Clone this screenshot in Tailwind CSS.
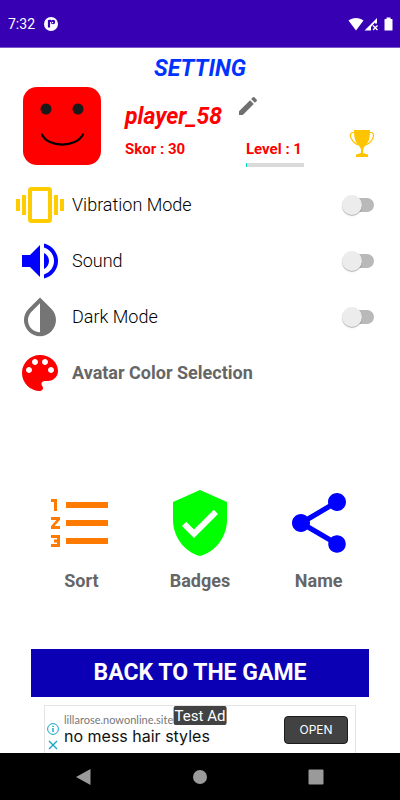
<!DOCTYPE html>
<html lang="en">
<head>
    <meta charset="UTF-8">
    <meta name="viewport" content="width=device-width, initial-scale=1.0">
    <title>Setting</title>
    <script src="https://cdn.jsdelivr.net/npm/@tailwindcss/browser@4"></script>
</head>
<body class="bg-white font-['Roboto',sans-serif] min-h-screen flex flex-col">

    <!-- status bar -->
    <header class="bg-[#3700b3] h-12 pl-2 pr-1 flex items-center text-white border-b border-[#7a58cc]">
        <span class="text-sm">7:32</span>
        <svg class="w-4 h-4 ml-2" viewBox="0 0 16 16">
            <circle cx="8" cy="8" r="7" fill="#fff"/>
            <path d="M6 4v7.500M6 4.800h2" stroke="#3700b3" stroke-width="2.200" fill="none"/>
            <circle cx="10" cy="6" r="2.200" fill="#3700b3"/>
            <circle cx="9.500" cy="6.500" r=".8" fill="#fff"/>
        </svg>
        <svg class="w-4 h-4 ml-auto" viewBox="0 0 16 16" fill="#fff">
            <path d="M8 14.500L.5 4.500C4.500 1 11.500 1 15.500 4.500z"/>
        </svg>
        <svg class="w-4 h-4" viewBox="0 0 16 16" fill="#fff">
            <path d="M.5 14.500L13 2v5.500h-2V6.500L7 11v3.500z"/>
            <path d="M9 9.500l4.500 4.500M13.500 9.500l-4.500 4.500" stroke="#fff" stroke-width="1.400"/>
        </svg>
        <svg class="w-4 h-4" viewBox="0 0 16 16" fill="#fff">
            <path d="M6.500 1.500h4V3h1.500q.5 0 .5.500v10.500q0 .5-.5.500h-7q-.5 0-.5-.5V3.500Q4.500 3 5 3h1.500z"/>
        </svg>
    </header>

    <main class="flex-1 flex flex-col">
        <h1 class="mt-[5px] h-8 leading-8 text-[23px] font-bold italic text-center text-[#0033ff]">SETTING</h1>

        <!-- player -->
        <section class="flex items-start pl-[23px] pr-6 mt-0.5">
            <svg class="w-[78px] h-[78px] shrink-0" viewBox="0 0 78 78">
                <rect width="78" height="78" rx="14" fill="#ff0000"/>
                <circle cx="23" cy="22" r="5.500" fill="#1a1a1a"/>
                <circle cx="55" cy="22" r="5.500" fill="#1a1a1a"/>
                <path d="M19 47.500C25 61 53 61 60 47.500" fill="none" stroke="#000" stroke-width="2.200" stroke-linecap="round"/>
            </svg>
            <div class="ml-6 flex-1 text-[#ff0000]">
                <div class="flex items-start h-11">
                    <h2 class="mt-3.5 leading-8 text-[23px] font-bold italic">player_58</h2>
                    <button class="ml-3.5 mt-[7px]" aria-label="Edit name">
                        <svg class="w-6 h-6" viewBox="0 0 24 24" fill="#707070">
                            <path d="M3 17.250V21h3.750L17.810 9.940l-3.750-3.750L3 17.250zM20.710 7.040a1 1 0 0 0 0-1.410l-2.340-2.340a1 1 0 0 0-1.410 0l-1.830 1.830 3.750 3.750 1.830-1.830z"/>
                        </svg>
                    </button>
                </div>
                <div class="flex items-start pt-2">
                    <p class="w-[121px] text-[15px] leading-5 font-bold">Skor : 30</p>
                    <div>
                        <p class="text-[15px] leading-5 font-bold">Level : 1</p>
                        <div class="mt-1 h-1 w-[58px] bg-[#dadada]" role="progressbar" aria-label="Level" aria-valuenow="2">
                            <div class="h-full bg-[#03dac5]" style="width: 2%"></div>
                        </div>
                    </div>
                    <svg class="ml-auto -mt-3 w-7 h-8" viewBox="0 0 28 32">
                        <path d="M7 5.500H4.500Q2 6 2.500 9.500 4 15 10 18M21 5.500h2.500Q26 6 25.500 9.500 24 15 18 18" fill="none" stroke="#ffc400" stroke-width="1.200"/>
                        <path d="M6 3h16q.5 11-5 16-2 2-2 4v3l5 1.500V30H8v-2.500L13 26v-3q0-2-2-4Q5.500 14 6 3z" fill="#ffc400"/>
                    </svg>
                </div>
            </div>
        </section>

        <!-- options -->
        <section class="mt-2.5 pl-4 pr-[26px] text-lg font-light text-black">
            <label class="flex items-center h-14">
                <svg class="w-12 h-12 mr-2" viewBox="0 0 24 24" fill="#ffcc00">
                    <path d="M0 15h2V9H0v6zm3 2h2V7H3v10zm19-8v6h2V9h-2zm-3 8h2V7h-2v10zM16.500 3h-9C6.670 3 6 3.670 6 4.500v15c0 .83.67 1.500 1.500 1.500h9c.83 0 1.500-.67 1.500-1.500v-15c0-.83-.67-1.500-1.500-1.500zM16 19H8V5h8v14z"/>
                </svg>
                Vibration Mode
                <input type="checkbox" class="appearance-none relative ml-auto w-8 h-5 before:absolute before:left-1 before:right-0 before:top-[3px] before:h-3.5 before:rounded-full before:bg-[#b9b9b9] after:absolute after:left-0 after:top-0 after:size-5 after:rounded-full after:bg-[#ececec] after:shadow-[0_1px_1px_rgba(0,0,0,0.3)] checked:after:left-3">
            </label>
            <label class="flex items-center h-14">
                <svg class="w-12 h-12 mr-2" viewBox="0 0 24 24" fill="#0000ff">
                    <path d="M3 9v6h4l5 5V4L7 9H3zm13.500 3c0-1.770-1.020-3.290-2.500-4.030v8.050c1.480-.73 2.500-2.250 2.500-4.020zM14 3.230v2.060c2.890.86 5 3.540 5 6.710s-2.110 5.850-5 6.710v2.060c4.010-.91 7-4.490 7-8.770s-2.990-7.860-7-8.770z"/>
                </svg>
                Sound
                <input type="checkbox" class="appearance-none relative ml-auto w-8 h-5 before:absolute before:left-1 before:right-0 before:top-[3px] before:h-3.5 before:rounded-full before:bg-[#b9b9b9] after:absolute after:left-0 after:top-0 after:size-5 after:rounded-full after:bg-[#ececec] after:shadow-[0_1px_1px_rgba(0,0,0,0.3)] checked:after:left-3">
            </label>
            <label class="flex items-center h-14">
                <svg class="w-12 h-12 mr-2" viewBox="0 0 24 24" fill="#757575">
                    <path d="M17.660 7.930L12 2.270 6.340 7.930c-3.120 3.120-3.120 8.190 0 11.310C7.900 20.800 9.950 21.580 12 21.580s4.100-.78 5.660-2.340c3.120-3.120 3.120-8.190 0-11.310zM12 19.590c-1.600 0-3.110-.62-4.240-1.760C6.620 16.690 6 15.190 6 13.590s.62-3.110 1.760-4.240L12 5.100v14.490z"/>
                </svg>
                Dark Mode
                <input type="checkbox" class="appearance-none relative ml-auto w-8 h-5 before:absolute before:left-1 before:right-0 before:top-[3px] before:h-3.5 before:rounded-full before:bg-[#b9b9b9] after:absolute after:left-0 after:top-0 after:size-5 after:rounded-full after:bg-[#ececec] after:shadow-[0_1px_1px_rgba(0,0,0,0.3)] checked:after:left-3">
            </label>
            <button class="flex items-center h-14 w-full font-bold text-[#666666]">
                <svg class="w-12 h-12 mr-2" viewBox="0 0 24 24" fill="#ff0000">
                    <path d="M12 3c-4.970 0-9 4.030-9 9s4.030 9 9 9c.83 0 1.500-.67 1.500-1.500 0-.39-.15-.74-.39-1.010-.23-.26-.38-.61-.38-.99 0-.83.67-1.500 1.500-1.500H16c2.760 0 5-2.240 5-5 0-4.420-4.030-8-9-8zm-5.500 9c-.83 0-1.500-.67-1.500-1.500S5.670 9 6.500 9 8 9.670 8 10.500 7.330 12 6.500 12zm3-4C8.670 8 8 7.330 8 6.500S8.670 5 9.500 5s1.500.67 1.500 1.500S10.330 8 9.500 8zm5 0c-.83 0-1.500-.67-1.500-1.500S13.670 5 14.500 5s1.500.67 1.500 1.500S15.330 8 14.500 8zm3 4c-.83 0-1.500-.67-1.500-1.500S16.670 9 17.500 9s1.500.67 1.500 1.500-.67 1.500-1.500 1.500z"/>
                </svg>
                Avatar Color Selection
            </button>
        </section>

        <!-- shortcuts -->
        <nav class="mt-auto mb-14 mx-[22px] grid grid-cols-3 text-lg leading-6 font-bold text-[#666666]">
            <button class="flex flex-col items-center gap-2.5">
                <svg class="w-18 h-18" viewBox="0 0 24 24" fill="#ff7b00">
                    <path d="M2 17h2v.5H3v1h1v.5H2v1h3v-4H2v1zm1-9h1V4H2v1h1v3zm-1 3h1.800L2 13.100v.9h3v-1H3.200L5 10.900V10H2v1zm5-6v2h14V5H7zm0 14h14v-2H7v2zm0-6h14v-2H7v2z"/>
                </svg>
                Sort
            </button>
            <button class="flex flex-col items-center gap-2.5">
                <svg class="w-18 h-18" viewBox="0 0 24 24" fill="#00ff00">
                    <path d="M12 1L3 5v6c0 5.550 3.840 10.740 9 12 5.160-1.260 9-6.450 9-12V5l-9-4zm-2 16l-4-4 1.410-1.410L10 14.170l6.590-6.590L18 9l-8 8z"/>
                </svg>
                Badges
            </button>
            <button class="flex flex-col items-center gap-2.5">
                <svg class="w-18 h-18" viewBox="0 0 24 24" fill="#0000ff">
                    <path d="M18 16.080c-.76 0-1.440.3-1.960.77L8.910 12.700c.05-.23.09-.46.09-.7s-.04-.47-.09-.7l7.050-4.110c.54.5 1.250.81 2.040.81 1.660 0 3-1.340 3-3s-1.340-3-3-3-3 1.340-3 3c0 .24.04.47.09.7L8.040 9.810C7.500 9.310 6.790 9 6 9c-1.660 0-3 1.340-3 3s1.340 3 3 3c.79 0 1.500-.31 2.040-.81l7.120 4.160c-.05.21-.08.43-.08.65 0 1.610 1.310 2.920 2.920 2.920s2.920-1.310 2.920-2.920-1.310-2.920-2.920-2.920z"/>
                </svg>
                Name
            </button>
        </nav>

        <button class="mx-[31px] h-12 bg-[#0c00b4] text-white text-[23px] font-bold">BACK TO THE GAME</button>

        <!-- ad banner -->
        <aside class="relative mt-2 mx-11 h-12 border border-b-0 border-[#e4e4e4] flex items-center">
            <div class="w-[19px] pt-3.5 pr-1 flex flex-col items-center gap-1">
                <svg class="w-3 h-3" viewBox="0 0 12 12" fill="none" stroke="#13a5c9">
                    <circle cx="6" cy="6" r="5.400"/>
                    <path d="M6 5v4M6 2.800v1.300" stroke-width="1.400"/>
                </svg>
                <svg class="w-3 h-3" viewBox="0 0 12 12" fill="none" stroke="#13a5c9">
                    <path d="M2 2l8 8M10 2l-8 8" stroke-width="1.300"/>
                </svg>
            </div>
            <div class="whitespace-nowrap">
                <p class="text-[11px] leading-3 text-[#777777] font-['Lato',sans-serif]">lillarose.nowonline.site</p>
                <p class="text-base leading-5 text-[#111111] font-['Inter',sans-serif]">no mess hair styles</p>
            </div>
            <button class="ml-auto mr-[7px] w-16 h-7 rounded-sm bg-[#424242] border border-[#1c1c1c] text-white text-xs font-['Inter',sans-serif]">OPEN</button>
            <span class="absolute top-0 left-1/2 -translate-x-1/2 h-[19px] px-px rounded-xs bg-[#424242] text-white text-[15px] leading-5 whitespace-nowrap">Test Ad</span>
        </aside>
    </main>

    <!-- system navigation -->
    <footer class="bg-black h-[47px] px-[76px] flex items-center justify-between">
        <button aria-label="Back">
            <svg class="w-4 h-4" viewBox="0 0 16 16" fill="#9a9a9a"><path d="M0 8L14.500 0v16z"/></svg>
        </button>
        <button aria-label="Home">
            <svg class="w-4 h-4" viewBox="0 0 16 16" fill="#9a9a9a"><circle cx="8" cy="8" r="7"/></svg>
        </button>
        <button aria-label="Recent apps">
            <svg class="w-4 h-4" viewBox="0 0 16 16" fill="#9a9a9a"><rect x=".5" y=".5" width="15" height="15" rx="1"/></svg>
        </button>
    </footer>

</body>
</html>
